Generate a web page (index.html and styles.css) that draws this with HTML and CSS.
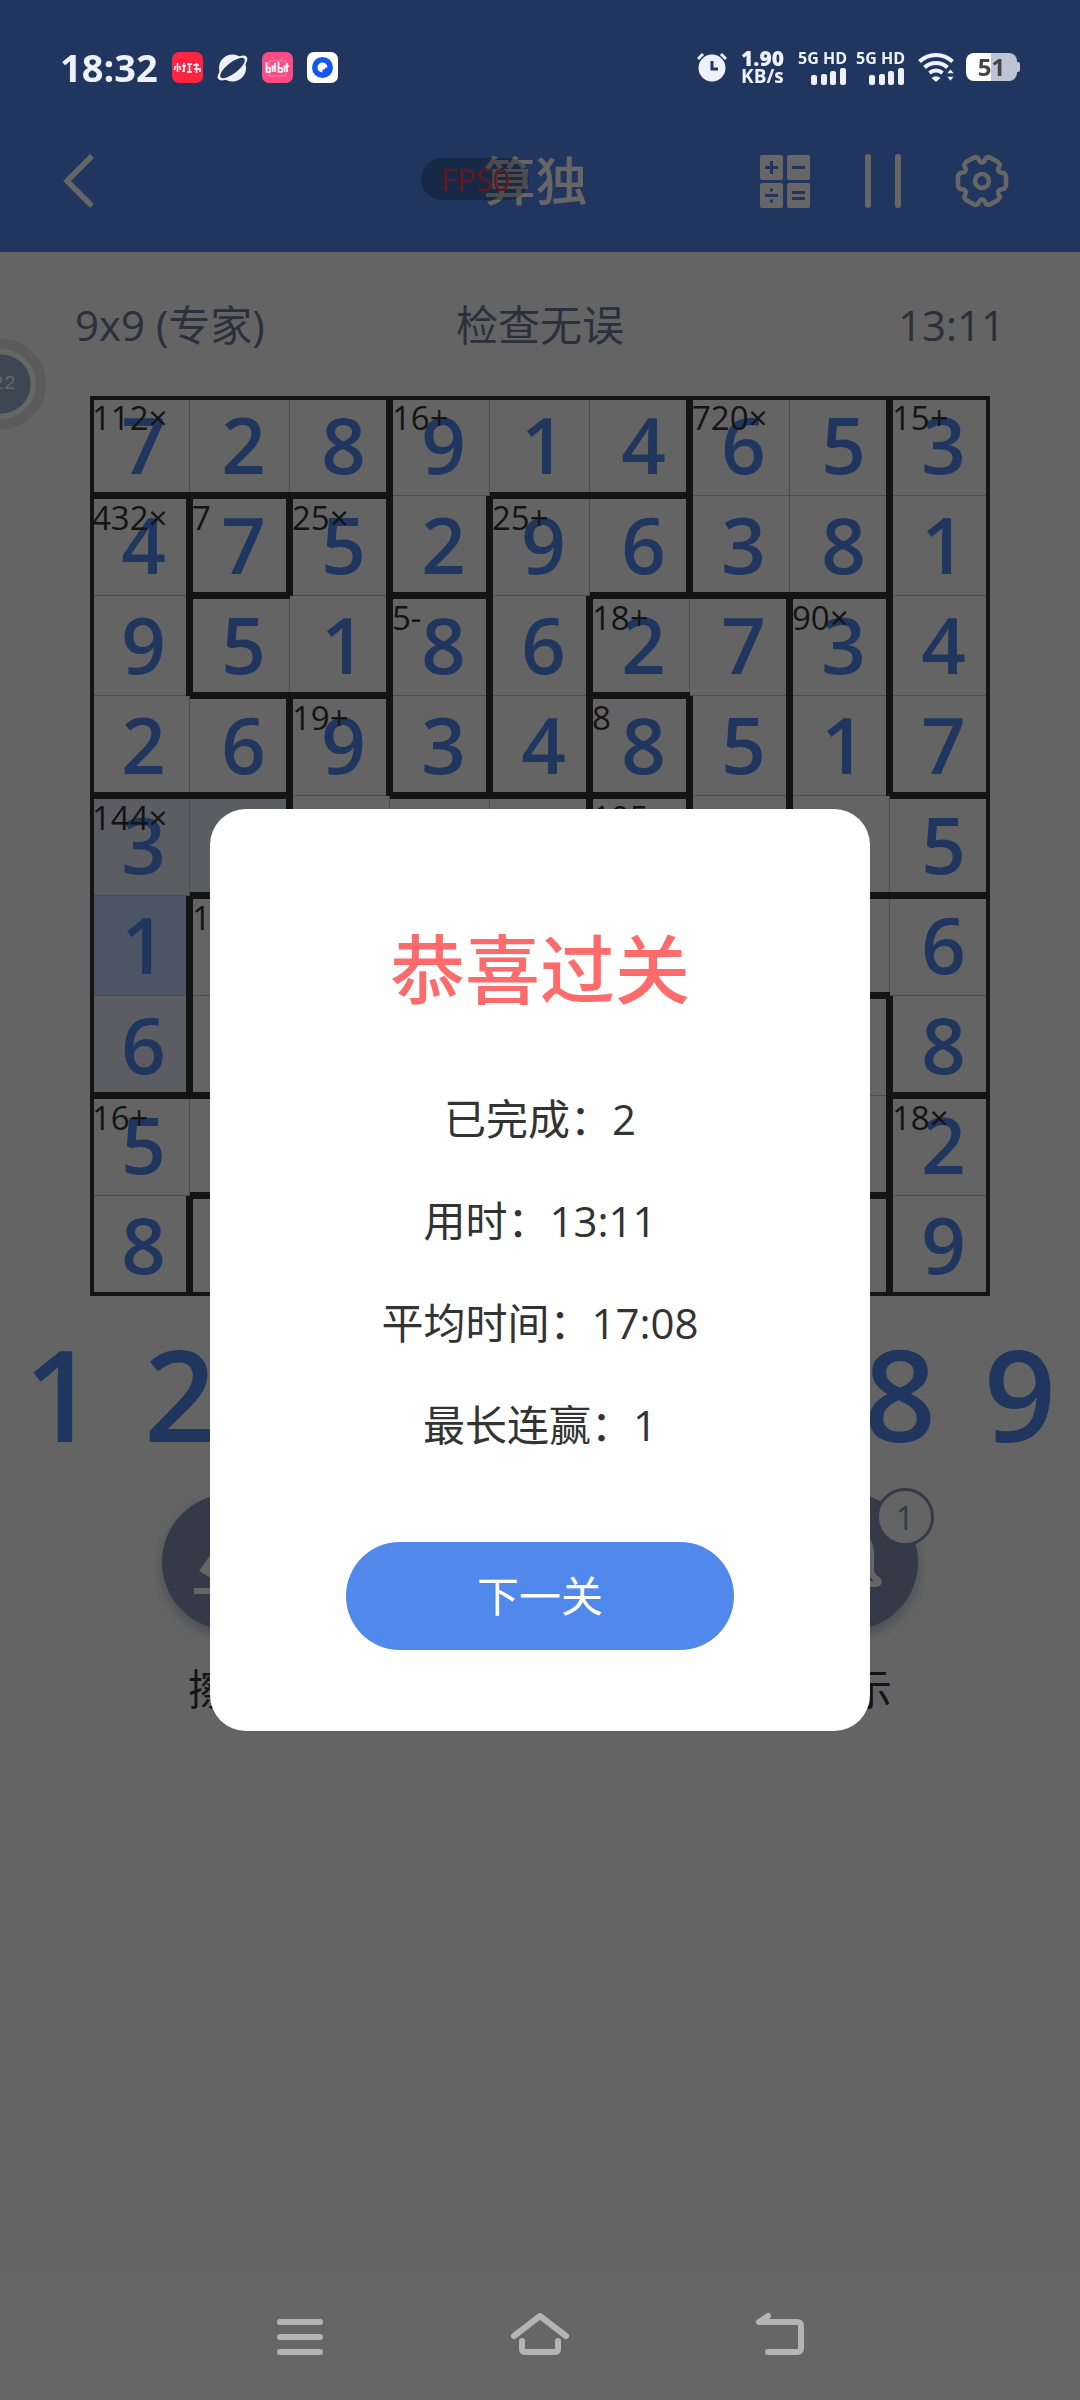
FILE: index.html
```html
<!DOCTYPE html>
<html lang="zh-CN">
<head>
<meta charset="utf-8">
<meta name="viewport" content="width=device-width">
<title>算独</title>
<link rel="stylesheet" href="styles.css">
</head>
<body>
<div class="status">
  <span class="clock">18:32</span>
  <span class="apps">
    <svg width="31" height="31" viewBox="0 0 31 31"><rect width="31" height="31" rx="7" fill="#ff2442"/><g stroke="#fff" stroke-width="1.6" fill="none"><path d="M5.500 11v9M3.500 14l-1 4M7.500 14l1 4M12 11v9M10 14h4M10 19h3M15 12h5M17.500 12v8M15 20h5M21 13h6M22 17h6v3M24.500 11v10"/></g></svg>
    <svg width="31" height="31" viewBox="0 0 31 31"><circle cx="15.500" cy="16" r="13.500" fill="#eef1fa"/><g transform="rotate(-38 15.500 16)"><ellipse cx="15.500" cy="16" rx="18" ry="7" fill="#eef1fa"/><ellipse cx="15.500" cy="16" rx="15" ry="5.500" fill="#20375e"/></g></svg>
    <svg width="31" height="31" viewBox="0 0 31 31"><rect width="31" height="31" rx="7" fill="#fb4b87"/><path d="M10 5l3 3M21 5l-3 3M7 9h17v15H7z" stroke="#fb86ad" fill="none"/><g stroke="#fff" stroke-width="1.700" fill="none"><path d="M4.500 10v10h3.500v-4h-3M10.500 13v7M13 11v9M16.500 10v10h3.500v-4h-3M22.500 13v7M25 11v9M10 15l4-1M22 15l5-1"/></g></svg>
    <svg width="31" height="31" viewBox="0 0 31 31"><rect width="31" height="31" rx="7" fill="#fff"/><circle cx="15.500" cy="15.500" r="10.500" fill="#1456f0"/><path d="M15.500 10.500a5 5 0 1 0 0 10v-3h1a2 2 0 0 0 2-2h2a5 5 0 0 0-5-5z" fill="#fff"/></svg>
  </span>
  <span class="signals">
    <svg class="alarm" width="30" height="30" viewBox="0 0 30 30"><circle cx="15" cy="16" r="13.500" fill="#eef1fa"/><path d="M15 9v8h6" stroke="#20375e" stroke-width="3" fill="none"/><path d="M1 7l5-5M29 7l-5-5" stroke="#eef1fa" stroke-width="3"/></svg>
    <span class="speed"><b>1.90</b><span>KB/s</span></span>
    <span class="sim"><span>5G HD</span><svg width="36" height="17" viewBox="0 0 36 17" fill="#eef1fa"><rect y="7" width="6" height="10" rx="2"/><rect x="10" y="6" width="6" height="11" rx="2"/><rect x="19" y="3" width="6" height="14" rx="2"/><rect x="29" width="6" height="17" rx="2"/></svg></span>
    <span class="sim"><span>5G HD</span><svg width="36" height="17" viewBox="0 0 36 17" fill="#eef1fa"><rect y="7" width="6" height="10" rx="2"/><rect x="10" y="6" width="6" height="11" rx="2"/><rect x="19" y="3" width="6" height="14" rx="2"/><rect x="29" width="6" height="17" rx="2"/></svg></span>
    <svg class="wifi" width="38" height="30" viewBox="0 0 38 30"><g fill="none" stroke="#eef1fa" stroke-width="4"><path d="M1.500 9.500a24 24 0 0 1 33 0"/><path d="M6.500 15.500a17 17 0 0 1 23 0"/><path d="M11.500 21a10 10 0 0 1 13 0"/></g><path d="M13.500 26a7 7 0 0 1 9 0L18 30z" fill="#eef1fa"/><path d="M29 21.500l3.500-4.500 3.500 4.500zM29 24.500l3.500 4.500 3.500-4.500z" fill="#eef1fa" stroke="#20375e" stroke-width=".5"/></svg>
    <span class="battery">51</span>
  </span>
</div>

<div class="screen">
  <header class="bar">
    <button class="icon back" aria-label="返回"><svg width="32" height="54" viewBox="0 0 32 54"><path d="M30 2L5 27l25 25" stroke="#fff" stroke-width="5.500" fill="none"/></svg></button>
    <h1 class="title">算独<span class="fps">FPS0</span></h1>
    <div class="actions">
      <button class="icon" aria-label="计算"><svg width="52" height="54" viewBox="0 0 52 54"><g fill="#fff"><rect x="1" y="1" width="23" height="25" rx="2"/><rect x="28" y="1" width="23" height="25" rx="2"/><rect x="1" y="29" width="23" height="25" rx="2"/><rect x="28" y="29" width="23" height="25" rx="2"/></g><path d="M6 13.500h13M12.500 7v13M33 13.500h13M6 41.500h13M33 38.500h13M33 44.500h13" stroke="#5088ec" stroke-width="3"/><path d="M11 34.500h3v3h-3zM11 45.500h3v3h-3z" fill="#5088ec"/></svg></button>
      <button class="icon" aria-label="暂停"><svg width="52" height="54" viewBox="0 0 52 54"><path d="M11 3v48M41 3v48" stroke="#fff" stroke-width="6" stroke-linecap="round"/></svg></button>
      <button class="icon" aria-label="设置"><svg width="54" height="56" viewBox="0 0 54 56"><g fill="none" stroke="#fff" stroke-width="4.500" stroke-linejoin="round"><path d="M20 4L23 5Q27 14 31 5L34 4L43 9L45 12Q40 20 49 20L51 23V33L49 36Q40 36 45 44L43 47L34 52L31 51Q27 42 23 51L20 52L11 47L9 44Q14 36 5 36L3 33V23L5 20Q14 20 9 12L11 9Z"/><circle cx="27" cy="28" r="7"/></g></svg></button>
    </div>
  </header>

  <main class="game">
    <div class="info"><span>9x9 (专家)</span><span>检查无误</span><time>13:11</time></div>

    <div class="board">
      <div class="cell b"><i>112×</i>7</div><div class="cell b">2</div><div class="cell b r">8</div><div class="cell"><i>16+</i>9</div><div class="cell b">1</div><div class="cell b r">4</div><div class="cell"><i>720×</i>6</div><div class="cell r">5</div><div class="cell"><i>15+</i>3</div>
      <div class="cell r"><i>432×</i>4</div><div class="cell r b"><i>7</i>7</div><div class="cell r"><i>25×</i>5</div><div class="cell r b">2</div><div class="cell"><i>25+</i>9</div><div class="cell r b">6</div><div class="cell b">3</div><div class="cell r b">8</div><div class="cell">1</div>
      <div class="cell r">9</div><div class="cell b">5</div><div class="cell r b">1</div><div class="cell r"><i>5-</i>8</div><div class="cell r">6</div><div class="cell b"><i>18+</i>2</div><div class="cell r">7</div><div class="cell r"><i>90×</i>3</div><div class="cell">4</div>
      <div class="cell b">2</div><div class="cell r b">6</div><div class="cell r"><i>19+</i>9</div><div class="cell r b">3</div><div class="cell r b">4</div><div class="cell r b"><i>8</i>8</div><div class="cell r">5</div><div class="cell r">1</div><div class="cell b">7</div>
      <div class="cell near"><i>144×</i>3</div><div class="cell near r b"></div><div class="cell"></div><div class="cell"></div><div class="cell r"></div><div class="cell r"><i>105</i></div><div class="cell r"></div><div class="cell b"></div><div class="cell b">5</div>
      <div class="cell picked r">1</div><div class="cell"><i>10</i></div><div class="cell"></div><div class="cell"></div><div class="cell"></div><div class="cell"></div><div class="cell"></div><div class="cell b"></div><div class="cell">6</div>
      <div class="cell near r b">6</div><div class="cell b"></div><div class="cell"></div><div class="cell"></div><div class="cell"></div><div class="cell"></div><div class="cell"></div><div class="cell r"></div><div class="cell b">8</div>
      <div class="cell"><i>16+</i>5</div><div class="cell b"></div><div class="cell"></div><div class="cell"></div><div class="cell"></div><div class="cell"></div><div class="cell"></div><div class="cell r b"></div><div class="cell"><i>18×</i>2</div>
      <div class="cell r">8</div><div class="cell"></div><div class="cell"></div><div class="cell"></div><div class="cell"></div><div class="cell"></div><div class="cell"></div><div class="cell r"></div><div class="cell">9</div>
    </div>

    <div class="pad"><button>1</button><button>2</button><button>3</button><button>4</button><button>5</button><button>6</button><button>7</button><button>8</button><button>9</button></div>

    <div class="tools">
      <button class="tool erase"><span class="disc"><svg width="72" height="72" viewBox="0 0 72 72" fill="#fff"><path d="M0 62h72v6H0z"/><path d="M5 45L34 4l30 18-22 34H24z"/></svg></span>擦除</button>
      <button class="tool hint"><span class="disc"><svg width="72" height="72" viewBox="0 0 72 72" fill="none" stroke="#fff" stroke-width="6" stroke-linejoin="round"><path d="M36 6Q57 8 57 28v16q1 7 6 9 4 4-1 5H10q-5-1-1-5 6-2 6-9V28Q15 8 36 6z"/></svg><span class="badge">1</span></span>提示</button>
    </div>
  </main>
</div>

<div class="ball">22</div>

<div class="mask">
  <section class="dialog" role="dialog" aria-labelledby="won">
    <h2 id="won">恭喜过关</h2>
    <p>已完成：2</p>
    <p>用时：13:11</p>
    <p>平均时间：17:08</p>
    <p>最长连赢：1</p>
    <button class="next">下一关</button>
  </section>
</div>

<nav class="nav">
  <button class="icon" aria-label="菜单"><svg width="60" height="48" viewBox="0 0 60 48"><path d="M10 12h40M10 27h40M10 42h40" stroke="#b4b4b4" stroke-width="6" stroke-linecap="round"/></svg></button>
  <button class="icon" aria-label="主页"><svg width="60" height="48" viewBox="0 0 60 48"><g fill="none" stroke="#b4b4b4" stroke-width="6" stroke-linecap="round" stroke-linejoin="round"><path d="M4 26L30 6l26 20"/><path d="M12 31v8q0 3 4 3h28q4 0 4-3v-8"/></g></svg></button>
  <button class="icon" aria-label="返回上一页"><svg width="60" height="48" viewBox="0 0 60 48"><path d="M18 42h29q4 0 4-4V16q0-4-4-4H9l9-6" fill="none" stroke="#b4b4b4" stroke-width="6" stroke-linecap="round" stroke-linejoin="round"/></svg></button>
</nav>
</body>
</html>
```

FILE: styles.css
```css
* { box-sizing: border-box; }

body {
  margin: 0;
  background: #fafafa;
  font-family: "Open Sans", "Noto Sans CJK SC", sans-serif;
  font-size: 42px;
  line-height: 60px;
}

button {
  padding: 0;
  border: 0;
  background: none;
  color: inherit;
  font: inherit;
}

svg { display: block; flex: none; }
.icon { display: flex; }

/* system status bar */
.status {
  position: fixed;
  inset: 0 0 auto;
  z-index: 3;
  display: flex;
  align-items: center;
  height: 134px;
  padding: 0 60px;
  color: #eef1fa;
}
.clock { font-size: 38px; font-weight: 700; line-height: 64px; }
.apps { display: flex; gap: 14px; margin-left: 14px; }
.signals { display: flex; align-items: center; margin-left: auto; }
.speed {
  display: grid;
  margin: 0 14px;
  font-size: 19px;
  font-weight: 700;
  line-height: 18px;
}
.speed b { font-size: 21px; }
.sim {
  display: grid;
  justify-items: end;
  gap: 2px;
  margin-right: 9px;
  font-size: 16px;
  font-weight: 700;
  line-height: 16px;
}
.wifi { margin: 0 10px 0 4px; }
.battery {
  position: relative;
  width: 51px;
  border-radius: 8px;
  background: linear-gradient(90deg, #fff 50%, #bcc4d6 50%);
  color: #444;
  font-size: 24px;
  font-weight: 700;
  line-height: 28px;
  text-align: center;
  margin-right: 3px;
}
.battery::after {
  content: "";
  position: absolute;
  top: 9px;
  right: -3px;
  width: 3px;
  height: 10px;
  border-radius: 0 2px 2px 0;
  background: #bcc4d6;
}

/* app header */
.bar {
  display: grid;
  grid-template-columns: 1fr auto 1fr;
  align-items: center;
  height: 252px;
  padding: 110px 71px 0 62px;
  background: #5088ec;
  color: #fff;
}
.title {
  position: relative;
  margin: 0;
  font-size: 52px;
  font-weight: 500;
  line-height: 72px;
}
.fps {
  position: absolute;
  top: 13px;
  left: -62px;
  width: 108px;
  border-radius: 21px;
  background: rgba(0, 0, 0, .25);
  color: #f03c46;
  font-size: 31px;
  font-weight: 400;
  line-height: 42px;
  text-align: center;
}
.actions { display: flex; align-items: center; justify-content: flex-end; gap: 46px; }

/* puzzle */
.info {
  display: grid;
  grid-template-columns: 1fr auto 1fr;
  padding: 43px 75px 41px;
  color: #6a7898;
}
.info time { text-align: right; }

.board {
  position: relative;
  display: grid;
  grid-template-columns: repeat(9, 1fr);
  grid-auto-rows: 100px;
  margin: 0 90px;
  color: #5088ec;
}
.board::after {
  content: "";
  position: absolute;
  inset: 0;
  border: 4px solid #323232;
}
.cell {
  position: relative;
  padding-left: 8px;
  border-right: 1px solid #c0c0c0;
  border-bottom: 1px solid #c0c0c0;
  font-size: 78px;
  font-weight: 600;
  line-height: 96px;
  text-align: center;
}
.cell i {
  position: absolute;
  top: 0;
  left: 2px;
  z-index: 1;
  color: #323232;
  font-size: 33px;
  font-style: normal;
  font-weight: 400;
  line-height: 44px;
}
.near { background: #e7e9f8; }
.picked { background: #bed5ff; }
.r::before, .b::after {
  content: "";
  position: absolute;
  z-index: 1;
  background: #323232;
}
.r::before { top: 0; bottom: -1px; right: -4px; width: 7px; }
.b::after { left: 0; right: -1px; bottom: -4px; height: 7px; }

.pad {
  display: grid;
  grid-template-columns: repeat(9, 1fr);
  margin-top: 22px;
  color: #5088ec;
  font-size: 126px;
  font-weight: 600;
  line-height: 150px;
}

.tools {
  display: grid;
  grid-template-columns: repeat(3, 1fr);
  margin: 26px 75px 0;
  color: #323232;
}
.tool { display: grid; justify-items: center; gap: 29px; }
.hint { grid-column: 3; }
.disc {
  position: relative;
  display: grid;
  place-items: center;
  width: 136px;
  height: 136px;
  border-radius: 50%;
  background: #8291b2;
  box-shadow: 0 6px 12px rgba(90, 100, 160, .4);
}
.badge {
  position: absolute;
  top: -6px;
  right: -16px;
  width: 58px;
  height: 58px;
  border: 3px solid #8291b2;
  border-radius: 50%;
  background: #fafafa;
  color: #8291b2;
  font-size: 33px;
  line-height: 54px;
}

/* floating assistant, half off the left edge */
.ball {
  position: fixed;
  top: 339px;
  left: -44px;
  width: 90px;
  height: 90px;
  padding-left: 26px;
  border: 10px solid #e4e4e4;
  border-radius: 50%;
  background: radial-gradient(circle, #98b0d0 29px, #fff 30px);
  color: #fff;
  font: 20px/70px "Liberation Mono", monospace;
}

/* result dialog */
.mask {
  position: fixed;
  inset: 0;
  z-index: 2;
  display: flex;
  align-items: center;
  justify-content: center;
  padding-top: 140px;
  background: rgba(0, 0, 0, .6);
}
.dialog {
  width: 100%;
  max-width: 660px;
  padding: 100px 40px 81px;
  border-radius: 36px;
  background: #fff;
  color: #333;
  text-align: center;
}
.dialog h2 {
  margin: 0 0 60px;
  color: #ff6b6b;
  font-size: 75px;
  font-weight: 500;
  line-height: 120px;
}
.dialog p { margin: 0 0 42px; }
.next {
  width: 388px;
  margin-top: 45px;
  border-radius: 54px;
  background: #5088ec;
  color: #fff;
  line-height: 108px;
}

/* system navigation */
.nav {
  position: fixed;
  inset: auto 0 0;
  z-index: 3;
  display: flex;
  align-items: center;
  justify-content: center;
  gap: 180px;
  height: 127px;
  padding-bottom: 6px;
  background: #666;
}
```
